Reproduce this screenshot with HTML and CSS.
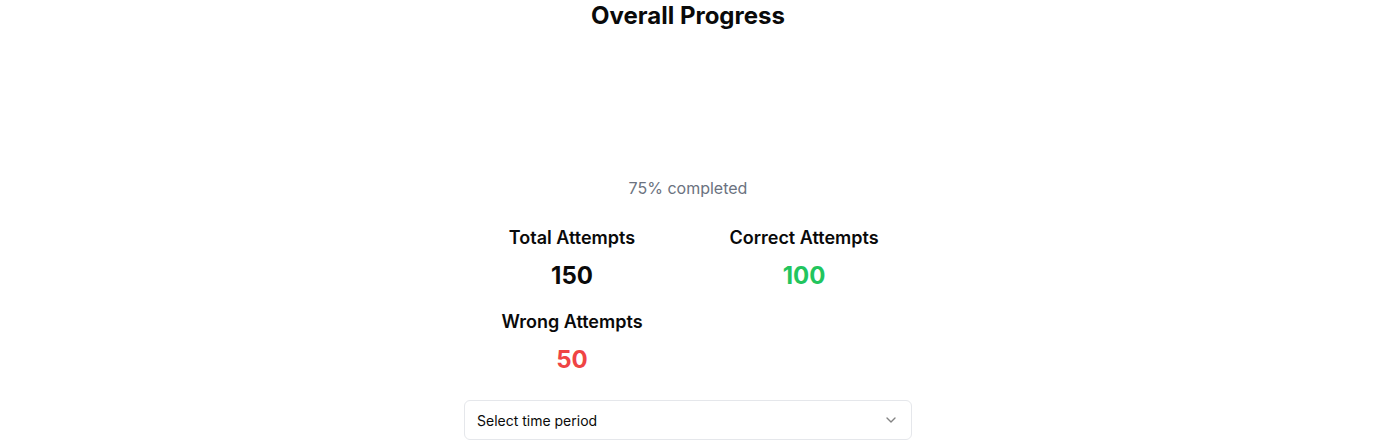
FILE: index.html
```html
<!DOCTYPE html>
<html lang="en">
<head>
<meta charset="utf-8">
<title>Overall Progress</title>
<link rel="stylesheet" href="styles.css">
</head>
<body>
<main class="wrap">
  <h2 class="title">Overall Progress</h2>
  <div class="chart"></div>
  <p class="completed">75% completed</p>
  <div class="stats">
    <div class="stat">
      <h3 class="label">Total Attempts</h3>
      <p class="value">150</p>
    </div>
    <div class="stat">
      <h3 class="label">Correct Attempts</h3>
      <p class="value green">100</p>
    </div>
    <div class="stat">
      <h3 class="label">Wrong Attempts</h3>
      <p class="value red">50</p>
    </div>
  </div>
  <button class="select" type="button">
    <span>Select time period</span>
    <svg class="chev" width="16" height="16" viewBox="0 0 24 24" fill="none" stroke="currentColor" stroke-width="2" stroke-linecap="round" stroke-linejoin="round"><path d="m6 9 6 6 6-6"/></svg>
  </button>
</main>
</body>
</html>
```
FILE: styles.css
```css
* { box-sizing: border-box; }
html, body { margin: 0; padding: 0; background: #fff; }
body {
  font-family: Inter, "Noto Sans", sans-serif;
  color: #0a0a0a;
}
.wrap {
  width: 448px;
  margin: 0 auto;
  display: flex;
  flex-direction: column;
  align-items: stretch;
}
.title {
  margin: 0 0 16px;
  font-size: 24px;
  line-height: 32px;
  font-weight: 700;
  text-align: center;
}
.chart { height: 128px; }
.completed {
  margin: 0 0 24px;
  font-size: 16px;
  line-height: 24px;
  color: #6b7280;
  text-align: center;
}
.stats {
  display: grid;
  grid-template-columns: 1fr 1fr;
  gap: 16px;
}
.stat { text-align: center; }
.label {
  margin: 0;
  font-size: 18px;
  line-height: 28px;
  font-weight: 600;
}
.value {
  margin: 8px 0 0;
  font-size: 24px;
  line-height: 32px;
  font-weight: 700;
}
.green { color: #22c55e; }
.red { color: #ef4444; }
.select {
  margin-top: 24px;
  height: 40px;
  width: 100%;
  display: flex;
  align-items: center;
  justify-content: space-between;
  padding: 0 12px;
  border: 1px solid #e5e7eb;
  border-radius: 6px;
  background: #fff;
  font-family: inherit;
  font-size: 14px;
  color: #0a0a0a;
  cursor: pointer;
}
.chev { color: #0a0a0a; opacity: 0.5; }
```
